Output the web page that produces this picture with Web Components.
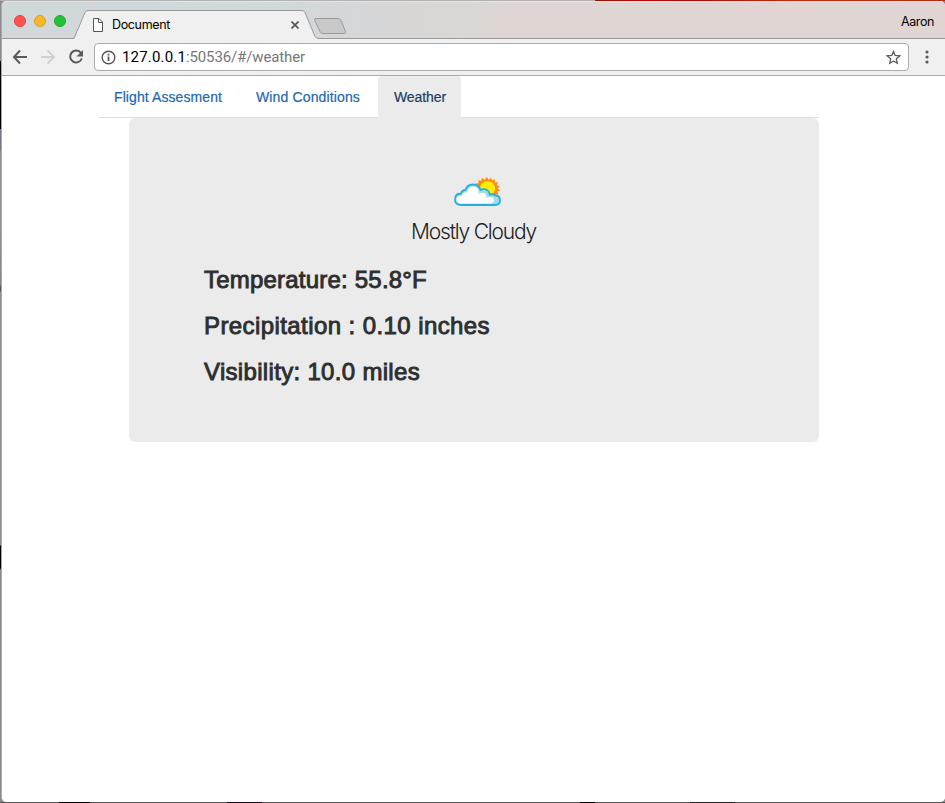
<!DOCTYPE html>
<html lang="en">
<head>
<meta charset="utf-8">
<title>Document</title>
<style>
html,body{margin:0;height:100%;overflow:hidden}
body{font-family:"Liberation Sans",Arial,sans-serif}
</style>
</head>
<body>
<browser-window>
  <tab-strip slot="chrome" user="Aaron"><browser-tab>Document</browser-tab></tab-strip>
  <address-bar slot="chrome" host="127.0.0.1" path=":50536/#/weather"></address-bar>
  <weather-page></weather-page>
</browser-window>
<script>
const define = (name, html, setup) => customElements.define(name, class extends HTMLElement {
  constructor() {
    super();
    this.attachShadow({mode: 'open'}).innerHTML = html;
  }
  connectedCallback() { if (setup) setup(this, this.shadowRoot); }
});

/* Text run whose letter spacing is adjusted to fill the given width. */
define('fit-text', `<style>:host{display:inline-block;white-space:pre}span{display:inline-block}</style><span><slot></slot></span>`,
  (el, root) => {
    const span = root.querySelector('span');
    span.style.letterSpacing = '0';
    const w = +el.getAttribute('width'), n = el.textContent.length;
    span.style.letterSpacing = (w - span.getBoundingClientRect().width) / n + 'px';
    el.style.width = w + 'px';
  });

define('browser-window', `<style>
:host{display:block;box-sizing:border-box;width:945px;height:803px;padding:1px 0 1px 1px;
 background:linear-gradient(#b5b2b4,#b5b2b4) 0 0/595px 1px no-repeat,
 linear-gradient(90deg,#8f1407,#b90b05 12%,#ad0d08 30%,#c52a0d 60%,#b52914) 595px 0/350px 1px no-repeat,
 linear-gradient(#000,#000) 59px 802px/31px 1px no-repeat,
 linear-gradient(#10071f,#10071f) 227px 802px/35px 1px no-repeat,
 linear-gradient(#000,#000) 580px 802px/15px 1px no-repeat,
 linear-gradient(#222,#222) 690px 802px/45px 1px no-repeat,
 linear-gradient(#555,#555) 0 802px/945px 1px no-repeat,
 linear-gradient(#8b8b8b 0 61px,#000 61px 129px,#777783 129px 150px,#929292 152px 220px,#858585 285px,#555 286px 291px,#8d8d8d 292px 545px,#000 546px 568px,#8b8b8b 570px 803px)}
.win{box-sizing:border-box;height:801px;display:flex;flex-direction:column;border-left:1px solid #aaa;border-radius:5px;overflow:hidden;background:#fff}
</style><div class="win"><slot name="chrome"></slot><slot></slot></div>`);

define('traffic-lights', `<style>:host{display:flex;gap:8px;padding:14px 0 0 12px;width:60px}
i{box-sizing:border-box;width:12px;height:12px;border-radius:50%;background:#ff5450;border:1px solid #e2403d}
i+i{background:#fdb62a;border-color:#dd9c24}i+i+i{background:#25c136;border-color:#20a92e}</style><i></i><i></i><i></i>`);

define('browser-tab', `<style>
:host{display:grid;width:246px;height:38px;font:12.5px Inter,sans-serif;color:#000}
svg,div{grid-area:1/1}
div{display:flex;align-items:center;padding:9px 0 0 20px}
.doc{margin-right:9px}.x{margin-left:auto;margin-right:20px}
</style><svg width="246" height="38"><path d="M0 37.500H1L12 11.500Q13 9.500 15 9.500H229Q231 9.500 232 11.500L242 35.500Q243 37.500 246 37.500V38H0Z" fill="#f0f0f0"/><path d="M0 37.500H1L12 11.500Q13 9.500 15 9.500H229Q231 9.500 232 11.500L242 35.500Q243 37.500 246 37.500" fill="none" stroke="#999"/></svg>
<div><svg class="doc" width="10" height="14" fill="#fff" stroke="#555"><path d="M.5.5H6L9.500 4V13.500H.5Z"/><path d="M5.500.5V4.500H9.500" fill="none"/></svg><fit-text width="58"></fit-text><svg class="x" width="8" height="8" stroke="#555" stroke-width="1.700"><path d="M.5.5 7.500 7.500M7.500.5.5 7.500"/></svg></div>`,
  (el, root) => {
    const t = root.querySelector('fit-text');
    t.textContent = el.textContent;
    t.connectedCallback();
  });

define('tab-strip', `<style>
:host{display:flex;flex:none;height:38px;background:linear-gradient(#fff5,#fff5) 0 0/100% 1px no-repeat,linear-gradient(#999,#999) 0 37px/100% 1px no-repeat,linear-gradient(90deg,#d0d8dc 0,#d2d8da 32%,#d6d6d7 40%,#dad7d3 49%,#dfd5d2 55%,#e1d5d4)}
traffic-lights{margin-right:-1px}
.new{margin:16px 0 0 -6px}.user{margin:13px 11px 0 auto;font:12.5px/15px Inter,sans-serif;color:#000}
</style><traffic-lights></traffic-lights><slot></slot>
<svg class="new" width="36" height="18"><path d="M3 1.500H25Q27 1.500 28 3.500L32.500 14.500Q33 16.500 31.500 16.500H10Q8 16.500 7 14.500L1.800 3.500Q1 1.500 3 1.500Z" fill="#c9c9ca" stroke="#999"/></svg>
<fit-text class="user" width="33"></fit-text>`,
  (el, root) => {
    const t = root.querySelector('.user');
    t.textContent = el.getAttribute('user');
    t.connectedCallback();
  });

define('address-bar', `<style>
:host{display:flex;flex:none;box-sizing:border-box;height:37px;background:#f0f0f0;border-bottom:1px solid #aaa;padding:4px 0 0 10px}
.nav{display:flex;gap:12px;width:82px;padding-top:6px;flex:none}
.field{box-sizing:border-box;display:flex;width:815px;height:28px;border:1px solid #aaa;border-radius:4px;background:#fff;padding:6px 7px 0 6px;font:15px/14px Roboto,sans-serif;color:#000}
.field svg{flex:none}.info{margin-right:6px}.path{color:#777}.star{margin-left:auto}.menu{margin:7px 0 0 15px}
</style>
<div class="nav"><svg width="16" height="16" fill="none" stroke="#5a5a5a" stroke-width="2"><path d="M15 8H2.500M8 1.500 2 8 8 14.500"/></svg>
<svg width="16" height="16" fill="none" stroke="#d0d0d0" stroke-width="2"><path d="M1 8H13.500M7.500 1.500 14 8 7.500 14.500"/></svg>
<svg width="16" height="16" fill="none" stroke="#5a5a5a" stroke-width="2"><path d="M13 4A6 6 0 1 0 13.800 9.500"/><path d="M15 1V7.500H8.500Z" fill="#5a5a5a" stroke="none"/></svg></div>
<div class="field"><svg class="info" width="15" height="15"><circle cx="7.500" cy="7.500" r="6.300" fill="none" stroke="#555" stroke-width="1.400"/><path d="M6.600 6.500H8.400V11H6.600ZM6.600 3.800H8.400V5.400H6.600Z" fill="#555"/></svg>
<fit-text class="host" width="64"></fit-text><fit-text class="path" width="119"></fit-text>
<svg class="star" width="15" height="15" viewBox="0 0 15 15"><path d="M7.500 1.500 9.200 5.500 13.700 5.900 10.300 8.800 11.300 13.200 7.500 10.900 3.700 13.200 4.700 8.800 1.300 5.900 5.800 5.500Z" fill="none" stroke="#5a5a5a" stroke-width="1.300"/></svg></div>
<svg class="menu" width="6" height="14" fill="#5a5a5a"><circle cx="3" cy="2" r="1.600"/><circle cx="3" cy="7" r="1.600"/><circle cx="3" cy="12" r="1.600"/></svg>`,
  (el, root) => {
    for (const key of ['host', 'path']) {
      const t = root.querySelector('.' + key);
      t.textContent = el.getAttribute(key);
      t.connectedCallback();
    }
  });

define('nav-tabs', `<style>:host{display:flex;box-sizing:border-box;width:720px;height:42px;border-bottom:1px solid #ddd}</style><slot></slot>`);

define('nav-tab', `<style>:host{display:block;box-sizing:border-box;height:42px;padding:11px 15px 0 15px;font-size:14px;line-height:20px;color:#1c67b0;border-radius:4px 4px 0 0;-webkit-text-stroke:.2px}
:host([active]){background:#ebebeb;color:#1b3d5f;padding:11px 15px 0 16px}</style><slot></slot>`);

define('weather-icon', `<style>:host{display:block;width:50px;height:32px;margin:1px 0 -1px 8px}svg{display:block}</style>
<svg width="50" height="32"><path d="M34 0 35.500 3 38 .5 38.800 3.600 42 2.300 41.800 5.500 45.200 5.300 43.700 8.200 47 9.200 44.600 11.400 47.200 13.500 44 14.500 45.600 17.500 42.200 17.500 42.500 21 33 21 24 9 22.500 6.500 25.500 6.300 25.200 3 28.200 4 29 .8 31.500 3Z" fill="#ff8a0d"/><circle cx="34.500" cy="11.500" r="7.600" fill="#fced08"/>
<path d="M8 28C4 28 2 26 2 22.500C2 19 4 16.500 8 16.500C9 13.500 10.500 13 12.500 13C13.500 9.500 16.500 7.500 20 7.500C23.500 7.500 26.500 9.500 27.500 13C32 11 36 13 37 17.500C40 17 42 17.500 42.500 18.500C45.500 18.500 47 20.500 47 23.500C47 26.500 45 28 42 28Z" fill="#a2dce7" stroke="#25afe0" stroke-width="1.800"/>
<path d="M9 26.500C5 26.500 3.500 25 3.500 22.500C3.500 20 5.500 18.500 9 18.700C9 16 11 15 14 15.500C14.500 11.500 17 9.500 20 9.500C24 9.500 26.500 13 25.500 17C30 14 34.500 17 33.500 21C37 19 41 20 41 23C41 25.500 39 26.500 36 26.500Z" fill="#fff"/></svg>`);

define('weather-page', `<style>
:host{display:block;flex:1;background:#fff;padding-left:97px}
.card{box-sizing:border-box;display:flex;flex-direction:column;width:690px;height:324px;margin-left:30px;padding:58px 75px 0 74px;background:#ebebeb;border-radius:6px;color:#2d2f2f}
.summary{display:flex;flex-direction:column;align-items:center}
.caption{margin-top:11px;font:300 21px/26px Inter,sans-serif;color:#222}
.facts{display:grid;gap:20px;margin:22px 0 0 1px;font-size:24px;line-height:26px;-webkit-text-stroke:.9px}
</style>
<nav-tabs><nav-tab><fit-text width="108">Flight Assesment</fit-text></nav-tab><nav-tab style="margin-left:4px"><fit-text width="104">Wind Conditions</fit-text></nav-tab><nav-tab active style="margin-left:3px"><fit-text width="52">Weather</fit-text></nav-tab></nav-tabs>
<div class="card"><div class="summary"><weather-icon></weather-icon><fit-text class="caption" width="125">Mostly Cloudy</fit-text></div>
<div class="facts"><fit-text width="223">Temperature: 55.8°F</fit-text><fit-text width="286">Precipitation : 0.10 inches</fit-text><fit-text width="216">Visibility: 10.0 miles</fit-text></div></div>`);
</script>
</body>
</html>
